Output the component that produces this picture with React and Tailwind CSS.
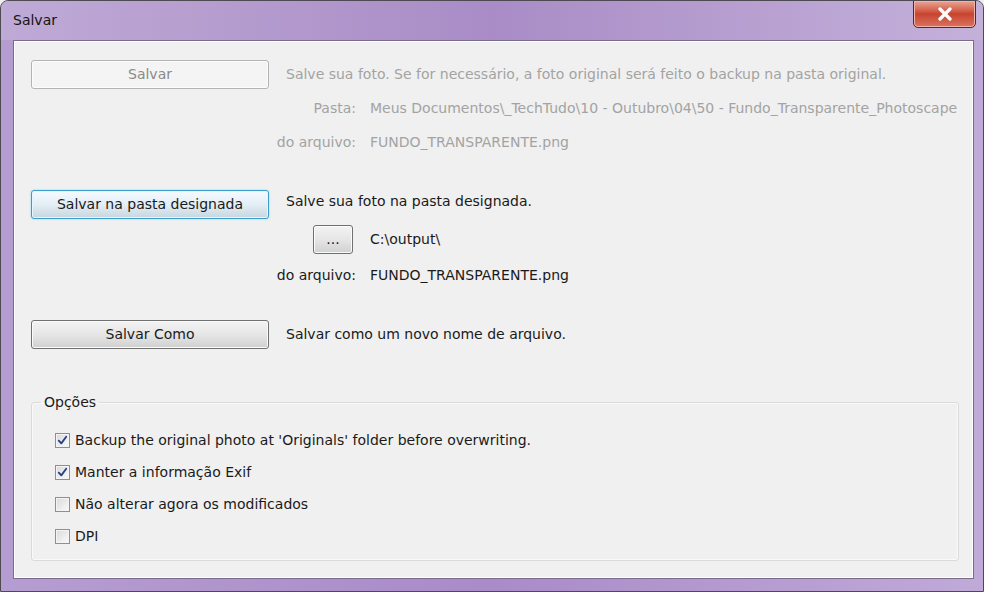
import React from "react";

const font = { fontFamily: '"DejaVu Sans", "Noto Sans", sans-serif' };

function WinButton({ children, variant = "normal", className = "" }) {
  const base =
    "flex items-center justify-center rounded-[3px] border text-[14px] leading-none";
  const styles = {
    normal:
      "border-[#707070] bg-linear-to-b from-[#f3f3f3] via-[#e6e6e6] to-[#d0d0d0] text-[#1a1a1a] shadow-[inset_0_0_0_1px_#fbfbfb]",
    focus:
      "border-[#3c9ccb] bg-linear-to-b from-[#f4fbff] via-[#e3eef5] to-[#c9d6df] text-[#1a1a1a] shadow-[0_0_2px_#7fd0f5,inset_0_0_0_1px_#e6f6ff]",
    disabled:
      "border-[#b3b3b3] bg-[#f4f4f4] text-[#8a8a8a] shadow-[inset_0_0_0_1px_#fcfcfc]",
  };
  return <div className={`${base} ${styles[variant]} ${className}`}>{children}</div>;
}

function Checkbox({ checked, label }) {
  return (
    <div className="flex h-[32px] items-center">
      <div className="flex h-[15px] w-[15px] shrink-0 items-center justify-center border border-[#8e8f8f] bg-linear-to-br from-[#d9d9d9] to-[#fbfbfb] shadow-[inset_0_0_0_1px_#f4f4f4]">
        {checked && (
          <svg width="11" height="11" viewBox="0 0 11 11">
            <path d="M1.8 5.6 L4.3 8.4 L9.2 1.8" fill="none" stroke="#283f86" strokeWidth="1.8" strokeLinecap="round" strokeLinejoin="round" />
          </svg>
        )}
      </div>
      <span className="ml-[5px] whitespace-nowrap text-[14px] text-[#1a1a1a]">{label}</span>
    </div>
  );
}

function LabelRow({ label, value, disabled, h = "h-[34px]" }) {
  const c = disabled ? "text-[#a3a3a3]" : "text-[#1a1a1a]";
  return (
    <div className={`flex ${h} items-center`}>
      <div className="ml-[246px] flex w-[79px] shrink-0 justify-end overflow-hidden whitespace-nowrap">
        <span className={c}>{label}</span>
      </div>
      <span className={`ml-[14px] whitespace-nowrap ${c}`}>{value}</span>
    </div>
  );
}

export default function App() {
  return (
    <div className="h-[592px] w-[984px] overflow-hidden bg-[#f0f0f0]" style={font}>
      <div className="relative flex h-[592px] w-[984px] flex-col overflow-hidden rounded-t-[8px] border border-[#4d4a52] bg-linear-to-r from-[#b59dd1] via-[#a98bc8] to-[#c0aad8]">
        {/* title bar */}
        <div className="flex h-[39px] shrink-0 items-center bg-linear-to-r from-[#bfaad6] via-[#a98cc6] to-[#c4b1da] pl-[12px]">
          <span className="-mt-[1px] text-[14px] text-[#141414]">Salvar</span>
        </div>
        {/* close button */}
        <div className="absolute left-[912px] top-[-1px] flex h-[28px] w-[63px] items-center justify-center rounded-b-[5px] border border-[#5c2520] bg-linear-to-b from-[#e9a595] via-[#c8432e] to-[#d8735f] shadow-[inset_0_0_0_1px_#f0b4a8]">
          <svg width="16" height="14" viewBox="0 0 16 14">
            <path d="M3 2 L13 12 M13 2 L3 12" stroke="#ffffff" strokeWidth="3.2" strokeLinecap="round" />
          </svg>
        </div>
        {/* content */}
        <div className="ml-[12px] mr-[9px] flex h-[539px] shrink-0 flex-col border border-[#7a6a8e] bg-[#f0f0f0] pl-[17px] pt-[16px] text-[14px] shadow-[inset_0_0_0_1px_#ffffff]">
          {/* Salvar */}
          <div className="flex h-[34px] items-center">
            <WinButton variant="disabled" className="h-[29px] w-[238px]">Salvar</WinButton>
            <span className="ml-[17px] whitespace-nowrap text-[#a3a3a3]">
              Salve sua foto. Se for necessário, a foto original será feito o backup na pasta original.
            </span>
          </div>
          <div className="w-[927px] overflow-hidden">
            <LabelRow disabled label="Pasta:" value="Meus Documentos\_TechTudo\10 - Outubro\04\50 - Fundo_Transparente_Photoscape" />
          </div>
          <LabelRow disabled label="Nome do arquivo:" value="FUNDO_TRANSPARENTE.png" />

          {/* Salvar na pasta designada */}
          <div className="mt-[28px] flex h-[34px] items-center">
            <WinButton variant="focus" className="h-[29px] w-[238px]">Salvar na pasta designada</WinButton>
            <span className="-mt-[6px] ml-[17px] whitespace-nowrap text-[#1a1a1a]">Salve sua foto na pasta designada.</span>
          </div>
          <div className="flex h-[36px] items-center">
            <WinButton className="ml-[282px] h-[29px] w-[40px] text-[11px]">...</WinButton>
            <span className="ml-[17px] text-[#1a1a1a]">C:\output\</span>
          </div>
          <LabelRow h="h-[36px]" label="Nome do arquivo:" value="FUNDO_TRANSPARENTE.png" />

          {/* Salvar Como */}
          <div className="mt-[24px] flex h-[34px] items-center">
            <WinButton className="h-[29px] w-[238px]">Salvar Como</WinButton>
            <span className="ml-[17px] whitespace-nowrap text-[#1a1a1a]">Salvar como um novo nome de arquivo.</span>
          </div>

          {/* Opções */}
          <fieldset className="mt-[41px] h-[169px] w-[928px] rounded-[3px] border border-[#dadada] pl-[9px] shadow-[inset_0_0_0_1px_#fafafa]">
            <legend className="px-[3px] text-[14px] leading-[20px] text-[#1a1a1a]">Opções</legend>
            <div className="ml-[14px] mt-[12px] flex flex-col">
              <Checkbox checked label="Backup the original photo at 'Originals' folder before overwriting." />
              <Checkbox checked label="Manter a informação Exif" />
              <Checkbox label="Não alterar agora os modificados" />
              <Checkbox label="DPI" />
            </div>
          </fieldset>
        </div>
      </div>
    </div>
  );
}
